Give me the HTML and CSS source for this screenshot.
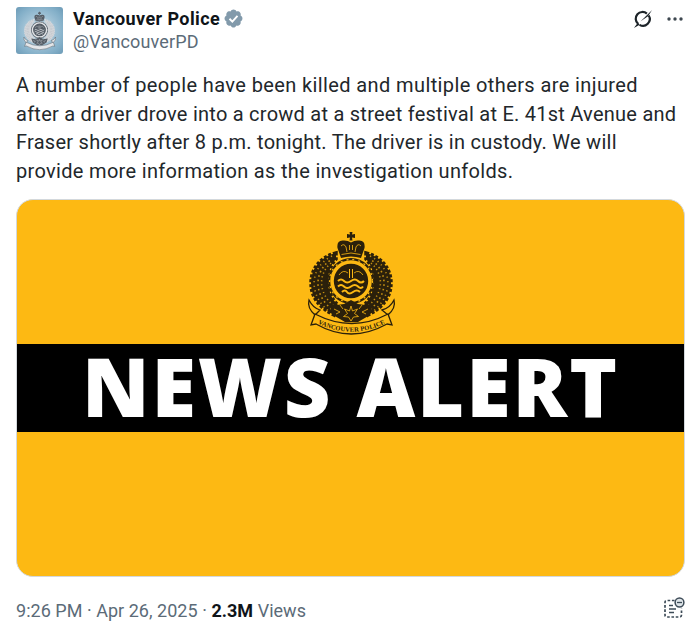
FILE: index.html
```html
<!DOCTYPE html>
<html lang="en">
<head>
  <meta charset="UTF-8">
  <meta name="viewport" content="width=device-width, initial-scale=1.0">
  <title>Vancouver Police</title>
  <link rel="stylesheet" href="styles.css">
</head>
<body>
  <!-- Crest shapes, shared by the avatar and the alert card -->
  <svg class="defs" width="0" height="0">
    <symbol id="crest" viewBox="0 0 110 115">
      <!-- Wreath -->
      <path class="leaf" d="M40 28C24 32 15 44 15 58C15 73 24 83 38 90L42 80C29 68 29 46 40 34zM70 28C86 32 95 44 95 58C95 73 86 83 72 90L68 80C81 68 81 46 70 34z"/>
      <path class="speck s1" d="M36 31C12 43 13 72 34 87M74 31C98 43 97 72 76 87"/>
      <path class="speck s2" d="M36 34C17 46 17 71 38 86M74 34C93 46 93 71 72 86"/>
      <path class="speck s3" d="M35 38C22 49 22 68 38 81M75 38C88 49 88 68 72 81"/>
      <!-- Crown -->
      <path class="ink" d="M53.500 7h3l-.5 2.500 3-.5v4l-3-.5.5 3h-3l.5-3-3 .5V9l3 .5z"/>
      <path class="ink" d="M45 33L41.500 23q-1-7 5-7.500 5-.5 8.500 2 3.500-2.500 8.500-2 6 .5 5 7.500L65 33q-10-3-20 0z"/>
      <path class="line" d="M45 21q3-3 5 1l1 5M65 21q-3-3-5 1l-1 5M53.500 20v5M56.500 20v5M45.500 29.500q9.500-3 19 0"/>
      <!-- Belt and shield -->
      <circle class="ink" cx="55" cy="56" r="23"/>
      <circle class="ring" cx="55" cy="56" r="19"/>
      <circle class="marks" cx="55" cy="56" r="21.500"/>
      <path class="ink" d="M42 46q13-5 26 0v10q0 9-13 15-13-6-13-15z"/>
      <path class="wave" d="M42 56q3-3 6 0t7 0 7 0 6 0M42 61.500q3-3 6 0t7 0 7 0 5 0M46 67q3-3 5 0t6 0 7 0"/>
      <path class="line" d="M43 50q4-6 9-2M67 50q-4-6-9-2"/>
      <path class="post" d="M53.500 44v9M56.500 44v9"/>
      <!-- Flowers under the shield -->
      <path class="ink" d="M33 79l8 1 7-1 7-4 7 4 7 1 8-1-3 11-12 7H49l-12-7z"/>
      <path class="line" d="M55 81l1.500 5 5-2-3 4.500 4 3-5 .5-2.500 4-2.500-4-5-.5 4-3-3-4.500 5 2zM38 84l6 3-4 2M72 84l-6 3 4 2M44 80l3 4M66 80l-3 4"/>
      <!-- Ribbon -->
      <path class="ribbon" d="M13 75q-2 8 6 15l5-5q-7-2-11-10zM98 75q2 8-6 15l-6-5q8-2 12-10z"/>
      <path class="ribbon" d="M19 89l-4 11 5-1q35 20 71 0l5 1-4-11q-36 19-73 0z"/>
    </symbol>
  </svg>

  <article class="post-card">
    <header class="post-header">
      <div class="avatar">
        <svg class="avatar-crest"><use href="#crest"/></svg>
      </div>
      <div class="author">
        <div class="name-row">
          <span class="name">Vancouver Police</span>
          <svg class="badge" viewBox="0 0 22 22">
            <path fill="#829aab" d="M20.4 11c0-.65-.2-1.27-.55-1.8-.36-.54-.86-.96-1.45-1.22.22-.6.27-1.26.14-1.9-.13-.63-.44-1.21-.88-1.69-.48-.44-1.06-.75-1.69-.88-.64-.13-1.3-.08-1.9.14-.26-.59-.68-1.09-1.22-1.45C12.27 1.85 11.65 1.6 11 1.6s-1.27.25-1.8.6c-.54.36-.96.86-1.22 1.45-.6-.22-1.26-.27-1.9-.14-.63.13-1.21.44-1.69.88-.44.48-.75 1.06-.88 1.69-.13.64-.08 1.3.14 1.9-.59.26-1.09.68-1.45 1.22-.35.53-.6 1.15-.6 1.8s.25 1.27.6 1.8c.36.54.86.96 1.45 1.22-.22.6-.27 1.26-.14 1.9.13.63.44 1.21.88 1.69.48.44 1.06.75 1.69.88.64.13 1.3.08 1.9-.14.26.59.68 1.09 1.22 1.45.53.35 1.15.6 1.8.6s1.27-.25 1.8-.6c.54-.36.96-.86 1.22-1.45.6.22 1.26.27 1.9.14.63-.13 1.21-.44 1.69-.88.44-.48.75-1.06.88-1.69.13-.64.08-1.3-.14-1.9.59-.26 1.09-.68 1.45-1.22.35-.53.55-1.15.55-1.8z"/>
            <path fill="none" stroke="#fff" stroke-width="2" d="M6.8 11.3l3 3 5.4-6"/>
          </svg>
        </div>
        <span class="handle">@VancouverPD</span>
      </div>
      <div class="actions">
        <svg class="grok" viewBox="0 0 22 22">
          <path fill="none" stroke="#1c2328" stroke-width="2.4" d="M5.5 16.2A7.400 7.400 0 0 1 15.3 5.1M17.3 7.2A7.400 7.400 0 0 1 7.2 17.4"/>
          <path fill="#1c2328" d="M1 21l4.500-6.200 1.800 2.500zM8.500 13.500L21 1l-4.500 7z"/>
        </svg>
        <svg class="more" viewBox="0 0 18 6">
          <circle cx="3" cy="3" r="1.700"/><circle cx="9" cy="3" r="1.700"/><circle cx="15" cy="3" r="1.700"/>
        </svg>
      </div>
    </header>

    <p class="post-text">
      <span class="l1">A number of people have been killed and multiple others are injured</span>
      <span class="l2">after a driver drove into a crowd at a street festival at E. 41st Avenue and</span>
      <span class="l3">Fraser shortly after 8 p.m. tonight. The driver is in custody. We will</span>
      <span class="l4">provide more information as the investigation unfolds.</span>
    </p>

    <div class="media">
      <div class="media-top">
        <svg class="media-crest" viewBox="0 0 110 115">
          <use href="#crest"/>
          <path id="ribbon-line" class="path" d="M20 97.500q35 18.500 71 0"/>
          <text class="ribbon-text"><textPath href="#ribbon-line" startOffset="2" textLength="70">VANCOUVER POLICE</textPath></text>
        </svg>
      </div>
      <div class="alert-bar"><span class="alert-text">NEWS ALERT</span></div>
    </div>

    <footer class="post-footer">
      <span class="meta">9:26 PM · Apr 26, 2025 · <b>2.3M</b> Views</span>
      <svg class="note" viewBox="0 0 22 22">
        <path fill="none" stroke="#3d4b57" stroke-width="1.7" stroke-dasharray="2.6 1.7" d="M11.5 3.5H4Q2 3.5 2 5.5V18q0 2 2 2h12.500q2 0 2-2v-6.500"/>
        <path fill="none" stroke="#3d4b57" stroke-width="1.6" d="M6 8.500h4M6 12h7M6 15.500h5"/>
        <circle cx="16.500" cy="5.500" r="4.400" fill="#dfe5e9" stroke="#3d4b57" stroke-width="1.500"/>
        <path stroke="#3d4b57" stroke-width="1.300" d="M14 5.500h5"/>
      </svg>
    </footer>
  </article>
</body>
</html>
```
FILE: styles.css
```css
body {
  margin: 0;
  background: #fff;
  font-family: Roboto, "Liberation Sans", sans-serif;
  color: #0f1419;
}
.defs {
  display: block;
}
.post-card {
  width: 669px;
  height: 627px;
  padding: 7px 0 0 16px;
  overflow: hidden;
}
/* Header */
.post-header {
  display: flex;
  height: 47px;
}
.avatar {
  width: 47px;
  height: 47px;
  border-radius: 3px;
  background: radial-gradient(circle, #b9d3e2 20%, #83afc8 75%, #6c9ab6);
  display: flex;
  align-items: center;
  justify-content: center;
  --ink: #555d66;
  --paper: #e4e6e9;
  --leaf: #d3d6da;
  --speck: #a3abb3;
}
.avatar-crest {
  width: 41px;
  height: 43px;
}
.author {
  margin-left: 10px;
  display: flex;
  flex-direction: column;
}
.name-row {
  display: flex;
  align-items: center;
  height: 23px;
}
.name {
  font-size: 18px;
  font-weight: 700;
  letter-spacing: 0.4px;
  white-space: nowrap;
}
.badge {
  width: 21px;
  height: 21px;
  margin-left: 3px;
}
.handle {
  font-size: 18px;
  line-height: 24px;
  letter-spacing: 0.15px;
  color: #5b6b78;
}
.actions {
  margin-left: auto;
  display: flex;
  gap: 13px;
  height: 24px;
  align-items: center;
  padding-right: 1px;
}
.grok {
  width: 20px;
  height: 20px;
}
.more {
  width: 18px;
  height: 6px;
  fill: #3d474f;
}
/* Text */
.post-text {
  margin: 17px 0 0;
  font-size: 20px;
  line-height: 28.5px;
  color: #22272b;
}
.post-text span {
  display: block;
  white-space: nowrap;
}
.l1 {
  letter-spacing: 0.39px;
}
.l2 {
  letter-spacing: 0.25px;
}
.l3 {
  letter-spacing: 0.26px;
}
.l4 {
  letter-spacing: 0.32px;
}
/* Alert image */
.media {
  width: 667px;
  height: 376px;
  margin-top: 14px;
  border: 1px solid #d3d8dc;
  border-radius: 17px;
  background: #fdb913;
  overflow: hidden;
  --ink: #2b200b;
  --paper: #fdb913;
  --leaf: #2b200b;
  --speck: #c38f12;
}
.media-top {
  height: 144px;
  display: flex;
  justify-content: center;
}
.media-crest {
  width: 110px;
  height: 115px;
  margin-top: 25px;
}
.alert-bar {
  height: 88px;
  background: #000;
  display: flex;
  justify-content: center;
}
.alert-text {
  font-family: "Noto Sans", "Open Sans", sans-serif;
  font-size: 81px;
  font-weight: 900;
  line-height: 84px;
  letter-spacing: 1.9px;
  word-spacing: 1px;
  color: #fff;
  white-space: nowrap;
}
/* Crest */
.ink {
  fill: var(--ink);
}
.speck,
.line,
.ring,
.marks,
.wave,
.post,
.path {
  fill: none;
}
.leaf {
  fill: var(--leaf);
  stroke: var(--leaf);
  stroke-width: 3.5;
  stroke-dasharray: 3 1.8;
}
.speck {
  stroke: var(--speck);
  stroke-width: 1.6;
}
.s1 {
  stroke-dasharray: 1.2 3.4;
}
.s2 {
  stroke-dasharray: 1.6 3;
  stroke-dashoffset: 2;
}
.s3 {
  stroke-dasharray: 1.2 2.8;
}
.line {
  stroke: var(--paper);
  stroke-width: 0.8;
}
.ring {
  stroke: var(--paper);
  stroke-width: 3.6;
}
.marks {
  stroke: var(--paper);
  stroke-width: 1.2;
  stroke-dasharray: 2 4;
}
.wave {
  stroke: var(--paper);
  stroke-width: 2;
}
.post {
  stroke: var(--paper);
  stroke-width: 1;
}
.ribbon {
  fill: var(--paper);
  stroke: var(--ink);
  stroke-width: 1.3;
}
.ribbon-text {
  font: 700 6.5px "Liberation Serif", serif;
  fill: var(--ink);
}
/* Footer */
.post-footer {
  display: flex;
  align-items: center;
  justify-content: space-between;
  height: 24px;
  margin-top: 21px;
}
.meta {
  font-size: 18px;
  letter-spacing: 0.03px;
  color: #5b6b78;
  white-space: nowrap;
}
.meta b {
  color: #0f1419;
}
.note {
  width: 22px;
  height: 22px;
  margin-top: -5px;
}
```
